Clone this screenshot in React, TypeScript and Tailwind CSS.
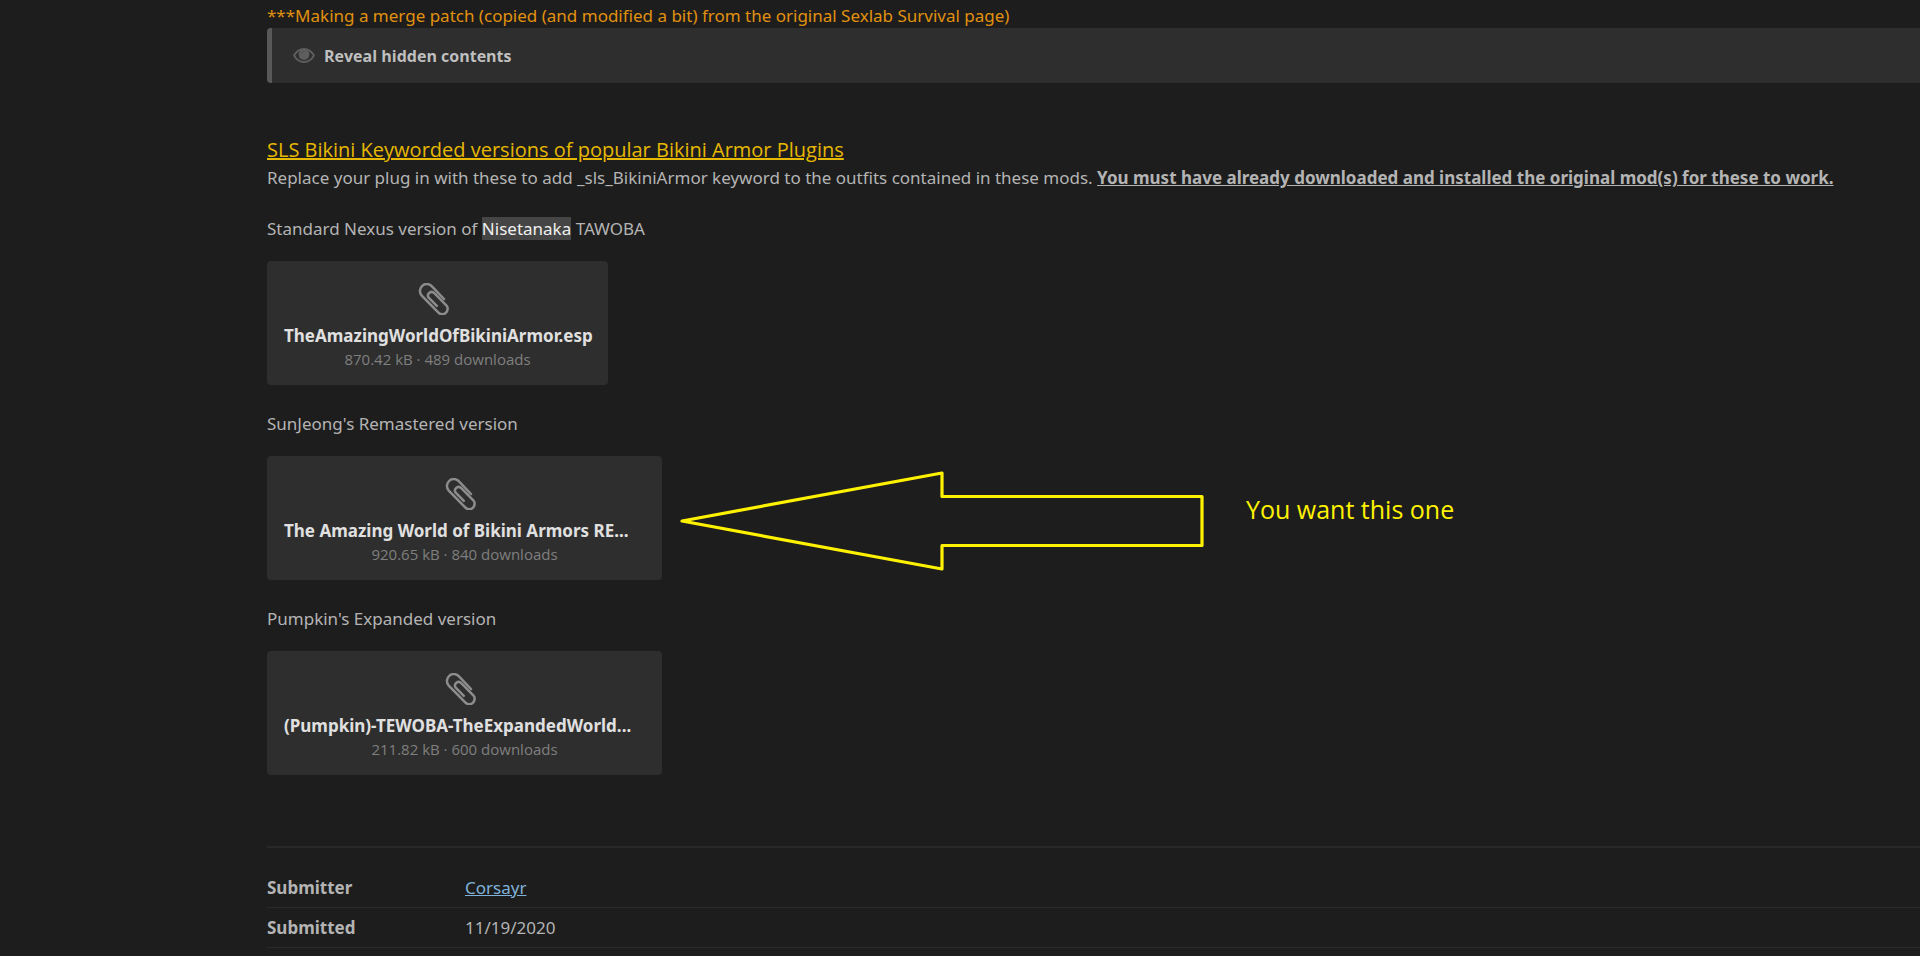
import React from 'react';

interface Attachment {
  label: React.ReactNode;
  name: string;
  meta: string;
  width: string;
  highlighted?: boolean;
}

const attachments: Attachment[] = [
  {
    label: (
      <>
        Standard Nexus version of <mark className="bg-[#454545] text-[#f0f0f0]">Nisetanaka</mark> TAWOBA
      </>
    ),
    name: 'TheAmazingWorldOfBikiniArmor.esp',
    meta: '870.42 kB · 489 downloads',
    width: 'w-[341px]',
  },
  {
    label: "SunJeong's Remastered version",
    name: 'The Amazing World of Bikini Armors RE...',
    meta: '920.65 kB · 840 downloads',
    width: 'w-[395px]',
    highlighted: true,
  },
  {
    label: "Pumpkin's Expanded version",
    name: '(Pumpkin)-TEWOBA-TheExpandedWorld...',
    meta: '211.82 kB · 600 downloads',
    width: 'w-[395px]',
  },
];

const EyeIcon: React.FC = () => (
  <svg viewBox="0 0 22 15" className="w-[22px] h-[15px] shrink-0" aria-hidden="true">
    <path d="M1 7.5C3.4 3.4 6.9 1 11 1s7.6 2.4 10 6.5C18.6 11.6 15.1 14 11 14S3.4 11.6 1 7.5Z" fill="none" stroke="#5e5e5e" strokeWidth="1.8" />
    <circle cx="11" cy="6.5" r="5.4" fill="#5e5e5e" />
    <path d="M8.3 6.2A2.8 2.8 0 0 1 11 3.5" fill="none" stroke="#505050" strokeWidth="1" strokeLinecap="round" />
  </svg>
);

const ClipIcon: React.FC = () => (
  <svg viewBox="0 0 40 32" className="w-10 h-8" fill="none" stroke="#8c8c8c" strokeWidth="2.5" strokeLinecap="round" strokeLinejoin="round" aria-hidden="true">
    <path d="M26 16 L14.2 3.6 A6.3 6.3 0 0 0 3.5 12.3 L20.2 29.4 A5.3 5.3 0 0 0 28.3 22.3 L16.3 10.2 A3.6 3.6 0 0 0 10.7 14.7 L18.8 22.8" />
  </svg>
);

const ArrowNote: React.FC = () => (
  <div className="flex items-start ml-[18px] mt-[15px]">
    <svg viewBox="0 0 524 100" className="w-[524px] h-[100px] shrink-0" aria-hidden="true">
      <path d="M2 50 L262 2 V25.5 H522 V74.5 H262 V98 Z" fill="none" stroke="#fff200" strokeWidth="3.2" strokeLinejoin="round" />
    </svg>
    <p className="ml-[42px] mt-[21px] font-['Open_Sans',sans-serif] text-[25px] leading-[34px] text-[#fff200] whitespace-nowrap">
      You want this one
    </p>
  </div>
);

const AttachmentBlock: React.FC<{ item: Attachment }> = ({ item }) => (
  <section className="mt-[26px]">
    <p>{item.label}</p>
    <div className="mt-5 flex items-start">
      <a
        href="#"
        className={`${item.width} h-[124px] shrink-0 rounded bg-[#2e2e2e] px-[17px] pt-[22px] flex flex-col items-center`}
      >
        <ClipIcon />
        <span className="mt-[9px] self-stretch whitespace-nowrap leading-6 font-bold text-[#e0e0e0]">{item.name}</span>
        <span className="mt-px font-['Open_Sans',sans-serif] text-[15px] leading-5 text-[#7f7f7f]">{item.meta}</span>
      </a>
      {item.highlighted && <ArrowNote />}
    </div>
  </section>
);

const App: React.FC = () => (
  <main className="min-h-screen overflow-hidden bg-[#1d1d1d] pl-[267px] pt-[3px] font-['Noto_Sans','Open_Sans',sans-serif] text-[17px] leading-[25px] text-[#b4b4b4]">
    <p className="text-[#e0910f]">
      ***Making a merge patch (copied (and modified a bit) from the original Sexlab Survival page)
    </p>
    <button
      type="button"
      className="w-full h-[55px] flex items-center gap-[9px] rounded-l border-l-[5px] border-[#585858] bg-[#2e2e2e] pl-[21px] text-left font-['Open_Sans',sans-serif] text-base font-bold text-[#bfbfbf]"
    >
      <EyeIcon />
      Reveal hidden contents
    </button>

    <h2 className="mt-[52px] font-['Open_Sans',sans-serif] text-[20px] leading-[30px] text-[#e6b800] underline decoration-2">
      SLS Bikini Keyworded versions of popular Bikini Armor Plugins
    </h2>
    <p className="whitespace-nowrap">
      Replace your plug in with these to add _sls_BikiniArmor keyword to the outfits contained in these mods.{' '}
      <strong className="underline">You must have already downloaded and installed the original mod(s) for these to work.</strong>
    </p>

    {attachments.map((item) => (
      <AttachmentBlock key={item.name} item={item} />
    ))}

    <dl className="mt-[71px] border-t-2 border-[#282828] pt-5">
      <div className="flex h-10 items-center border-b border-[#292929]">
        <dt className="w-[198px] font-bold">Submitter</dt>
        <dd>
          <a href="#" className="text-[#7fb2d9] underline">Corsayr</a>
        </dd>
      </div>
      <div className="flex h-10 items-center border-b border-[#292929]">
        <dt className="w-[198px] font-bold">Submitted</dt>
        <dd>11/19/2020</dd>
      </div>
    </dl>
  </main>
);

export default App;
